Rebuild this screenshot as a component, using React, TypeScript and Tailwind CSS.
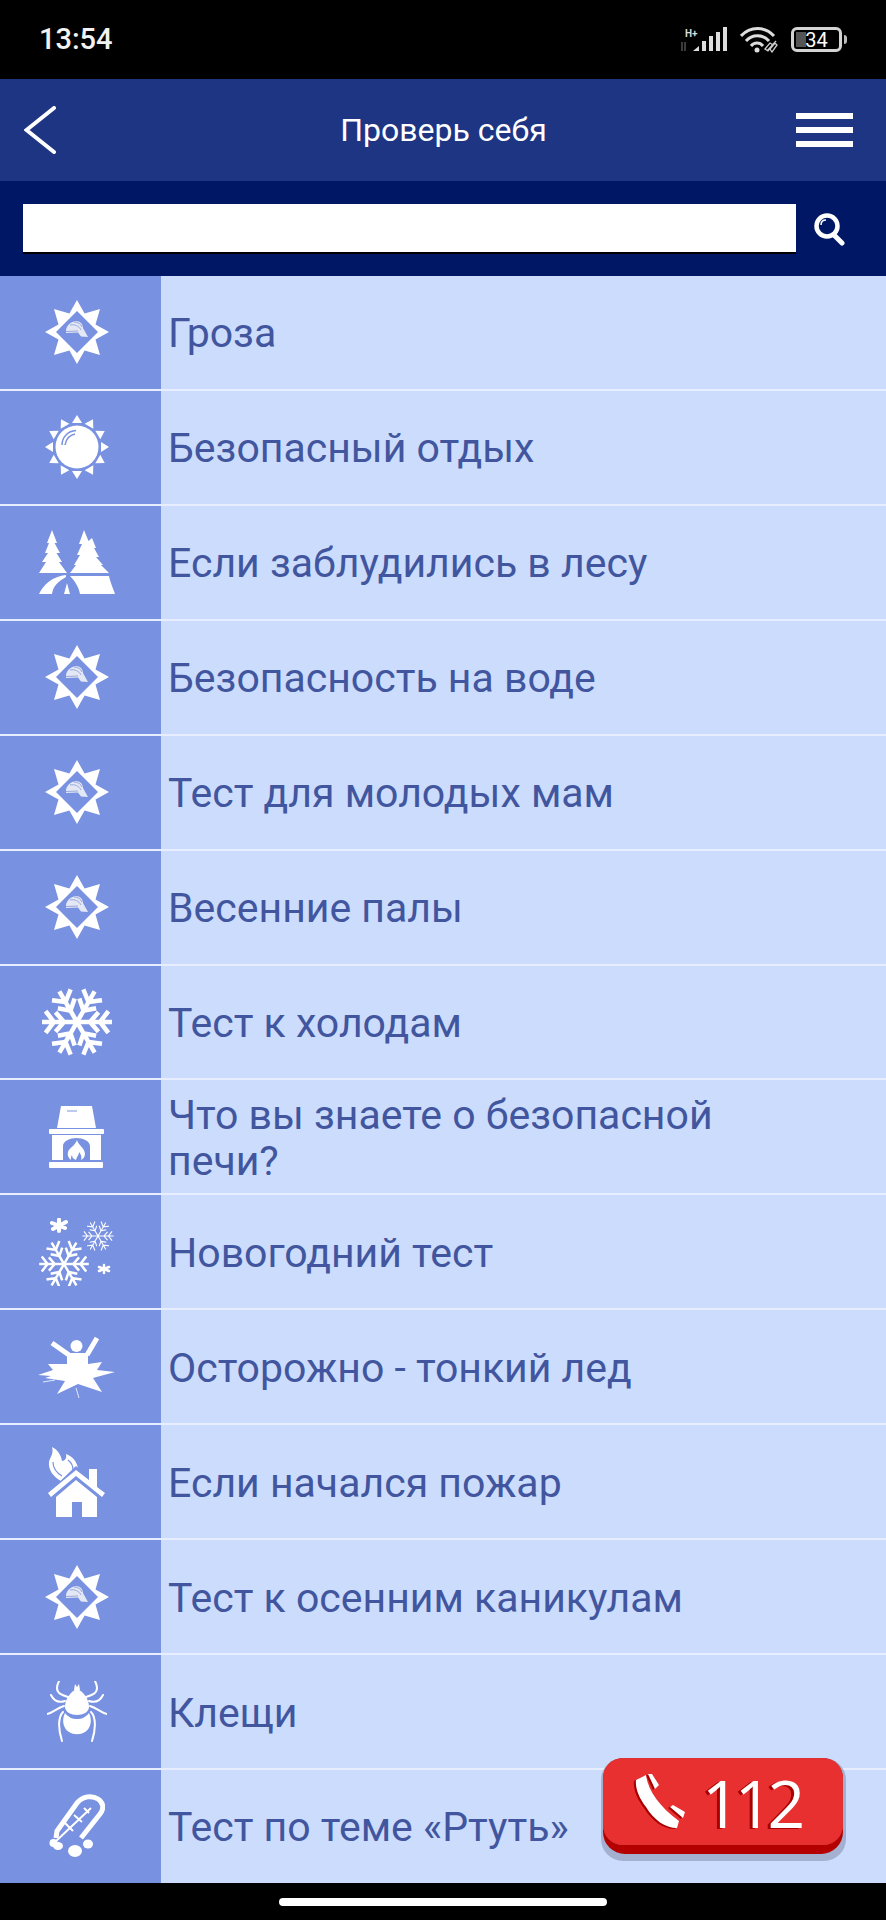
import type { ReactNode } from "react";

const Star = () => (
  <svg width="64" height="64" viewBox="0 0 64 64">
    <path
      fillRule="evenodd"
      fill="#fff"
      d="M32 0L39.600 13.500 55 9 50.500 24.400 64 32 50.500 39.600 55 55 39.600 50.500 32 64 24.400 50.500 9 55 13.500 39.600 0 32 13.500 24.400 9 9 24.400 13.500ZM32 11L11 32 32 53 53 32Z"
    />
    <path fill="#e4e8f5" d="M21 31C21 26 25 22 31 21 35 21 38 24 38 28L43 37 36 36.500 33 32.500 21 33Z" />
    <path fill="none" stroke="#8fa0d8" strokeWidth="0.900" d="M25 25C30 24 34 26 36 30M29 22C33 22 36 24 37 27M21 31.500L33 31" />
  </svg>
);

const Sun = () => (
  <svg width="64" height="64" viewBox="0 0 64 64">
    <circle cx="32" cy="32" r="21.500" fill="#fff" />
    <path fill="none" stroke="#7891e0" strokeWidth="1.500" d="M17 30C17 22 23 16 31 15.500M20 30C21 24 25 20 30 19" />
    {[0, 30, 60, 90, 120, 150, 180, 210, 240, 270, 300, 330].map((a) => (
      <polygon key={a} points="32,0 37,8 27,8" fill="#fff" transform={`rotate(${a} 32 32)`} />
    ))}
  </svg>
);

const Trees = () => (
  <svg width="76" height="65" viewBox="0 0 76 65">
    <path fill="#fff" d="M13 0L18 13 15.500 13 21 23 17.500 23 23 32 20 32 28 43H0L7 32 3 32 9 23 6 23 10 13 8 13Z" />
    <path fill="#fff" d="M45 0L49.500 11 53 8 57 18 55 18 60 27 57 27 64 35 62 35 70 43H31L37 35 35 35 41 25 38 25 43 14 40 14Z" />
    <path fill="#fff" d="M0 64C4 55 14 46 27 45L27 47C18 52 14 57 13 64Z" />
    <path fill="#fff" d="M31 46L70 46C72 55 75 60 76 64L41 64C40 57 35 50 31 46Z" />
    <polygon fill="#fff" points="25,64 28,53 31,64" />
  </svg>
);

const FlakeArm = ({ a, c, s }: { a: number; c: number; s: number }) => (
  <g transform={`rotate(${a} ${c} ${c}) translate(${c} ${c}) scale(${s})`}>
    <path d="M0 0V-33M-9 -30L0 -23 9 -30M-8 -20L0 -13 8 -20" />
  </g>
);

const Flake = ({ size, width }: { size: number; width: number }) => {
  const c = size / 2;
  const s = size / 70;
  return (
    <svg width={size} height={size} viewBox={`0 0 ${size} ${size}`}>
      <g fill="none" stroke="#fff" strokeWidth={width} strokeLinecap="square">
        {[30, 90, 150, 210, 270, 330].map((a) => (
          <FlakeArm key={a} a={a} c={c} s={s} />
        ))}
      </g>
    </svg>
  );
};

const Fireplace = () => (
  <svg width="55" height="62" viewBox="0 0 55 62">
    <path fill="#fff" d="M12 0H43L47 22H8ZM18 4.500V5.500H28V4.500Z" fillRule="evenodd" />
    <rect x="0" y="23" width="55" height="5" rx="1" fill="#fff" />
    <path fill="#fff" fillRule="evenodd" d="M3 29H52V54H3ZM14 54H41V40C41 35 34 32 27.500 32 21 32 14 35 14 40Z" />
    <rect x="0" y="56" width="54" height="6" rx="1" fill="#fff" />
    <path
      fill="#fff"
      d="M28 34C29 39 36 42 36 48 36 51 34 53 32 54 33 51 32 48 30 46 30 49 28 50 27 54 24 53 23 51 23 49 22 50 22 52 22 54 20 52 18 50 19 46 20 42 26 40 28 34Z"
    />
  </svg>
);

const SnowGroup = () => (
  <svg width="76" height="68" viewBox="0 0 76 68">
    <g transform="translate(0 21)">
      <Flake size={50} width={3.500} />
    </g>
    <g transform="translate(43 2)">
      <Flake size={32} width={2.400} />
    </g>
    <g fill="none" stroke="#fff" strokeWidth="4" strokeLinecap="round">
      <path d="M20 1.500L20 13M13 5L26 10M14 11L27 4" />
    </g>
    <g fill="none" stroke="#fff" strokeWidth="2.500" strokeLinecap="round">
      <path d="M65 47L65 55M60 49L70 53M60 53L70 49" />
    </g>
  </svg>
);

const Ice = () => (
  <svg width="77" height="62" viewBox="0 0 77 62">
    <circle cx="38.500" cy="10" r="6" fill="#fff" />
    <path fill="none" stroke="#fff" strokeWidth="5" d="M14 7L31 19M59 2L49 19" />
    <rect x="29" y="17" width="21" height="12" fill="#fff" />
    <path
      fill="#fff"
      d="M10 28L30 28H50L64 26 59 34 77 36 55 42 64 56 40 48 19 58 27 45 7 42 13 40 0 39 15 34Z"
    />
    <path fill="none" stroke="#fff" strokeWidth="0.800" d="M5 46L17 44M53 47L58 48M38 52L41 62" />
  </svg>
);

const House = () => (
  <svg width="58" height="70" viewBox="0 0 58 70">
    <path fill="#fff" d="M13 34C5 30 0 22 1 15 2 10 6 7 4 0 10 3 13 8 14 14 17 14 19 11 18 7 24 9 30 15 30 23L13 37Z" />
    <path fill="none" stroke="#7891e0" strokeWidth="1.200" d="M5 15C5 21 9 26 14 29M20 13C24 16 25 19 25 23" />
    <polygon fill="#7891e0" points="28,19 4,42 0,48 28,28 58,48 54,42" />
    <polygon fill="#fff" points="28,23 41,33 41,22 49,22 49,40 57,46 54,50 28,29 3,50 0,46" />
    <path fill="#fff" fillRule="evenodd" d="M8 50L28 33 49 50V70H8ZM24 55V70H34V55Z" />
  </svg>
);

const Tick = () => (
  <svg width="60" height="61" viewBox="0 0 60 61">
    <path fill="#fff" d="M30 8C36 10 42 18 42 26 42 31 36 34 30 34 24 34 18 31 18 26 18 18 24 10 30 8Z" />
    <path fill="#fff" d="M27 9L28 3 30 6 32 3 33 9Z" />
    <path fill="#fff" d="M18 32C22 37 26 38 30 38 34 38 38 37 42 32 46 40 43 48 38 51 33 54 27 54 22 51 17 48 14 40 18 32Z" />
    <g fill="none" stroke="#fff" strokeWidth="2" strokeLinecap="round">
      <path d="M21 16C14 14 10 12 10 7 10 4 11 2 12 0M18 20C12 22 7 20 4 14M17 25C10 27 6 32 0 33M16 31C11 36 11 48 15 60" />
      <path d="M39 16C46 14 50 12 50 7 50 4 49 2 48 0M42 20C48 22 53 20 56 14M43 25C50 27 54 32 60 33M44 31C49 36 49 48 45 60" />
    </g>
  </svg>
);

const Thermo = () => (
  <svg width="56" height="64" viewBox="0 0 56 64">
    <path
      fill="none"
      stroke="#fff"
      strokeWidth="5"
      d="M7 44L8 37 28 9C34 2 43 1 49 5 55 9 55 15 51 20L32 44"
    />
    <path fill="none" stroke="#fff" strokeWidth="2" d="M5 49L42 14M16 29L24 37M25 21L33 28M35 14L40 19" />
    <circle cx="4.500" cy="49" r="4" fill="#fff" />
    <ellipse cx="9" cy="52" rx="5" ry="4" fill="#fff" />
    <ellipse cx="26" cy="57" rx="7" ry="6" fill="#fff" />
    <ellipse cx="39" cy="50" rx="5" ry="4.500" fill="#fff" />
  </svg>
);

const icons: Record<string, () => ReactNode> = {
  star: Star,
  sun: Sun,
  trees: Trees,
  flake: () => <Flake size={70} width={4.500} />,
  fireplace: Fireplace,
  snow: SnowGroup,
  ice: Ice,
  house: House,
  tick: Tick,
  thermo: Thermo,
};

const rows = [
  { icon: "star", title: "Гроза" },
  { icon: "sun", title: "Безопасный отдых" },
  { icon: "trees", title: "Если заблудились в лесу" },
  { icon: "star", title: "Безопасность на воде" },
  { icon: "star", title: "Тест для молодых мам" },
  { icon: "star", title: "Весенние палы" },
  { icon: "flake", title: "Тест к холодам" },
  { icon: "fireplace", title: "Что вы знаете о безопасной печи?" },
  { icon: "snow", title: "Новогодний тест" },
  { icon: "ice", title: "Осторожно - тонкий лед" },
  { icon: "house", title: "Если начался пожар" },
  { icon: "star", title: "Тест к осенним каникулам" },
  { icon: "tick", title: "Клещи" },
  { icon: "thermo", title: "Тест по теме «Ртуть»" },
];

const StatusBar = () => (
  <div className="h-[79px] bg-black flex items-center justify-between pl-[39px] pr-[39px]">
    <span className="text-[29px] font-medium text-[#f2f2f2]">13:54</span>
    <div className="flex items-center gap-[13px]">
      <svg width="47" height="26" viewBox="0 0 47 26">
        <text x="5" y="10" fontSize="10" fontWeight="700" fill="#ddd" fontFamily="Roboto, sans-serif">H+</text>
        <path stroke="#777" strokeWidth="1" fill="none" d="M2 15V24M5 15V24" />
        <g fill="#ddd">
          <polygon points="13,24 19,19 19,24" />
          <rect x="22" y="14" width="4" height="10" />
          <rect x="29" y="9" width="4" height="15" />
          <rect x="36" y="5" width="4" height="19" />
          <rect x="43" y="0" width="4" height="24" />
        </g>
      </svg>
      <svg width="38" height="26" viewBox="0 0 38 26">
        <g fill="none" stroke="#ddd" strokeWidth="3">
          <path d="M1 9C10 -1 25 -1 34 9M6 14C12 7 23 7 29 14M11 19C14 15 20 15 23 19" />
        </g>
        <circle cx="17" cy="23" r="2.500" fill="#ddd" />
        <path fill="none" stroke="#ccc" strokeWidth="1.300" d="M27 24L36 14M25 22L30 16 33 18 28 24ZM30 22L35 16 37 18 32 25Z" />
      </svg>
      <div className="relative w-[51px] h-[25px] rounded-[6px] border-[3px] border-[#d4d4d4] flex items-center justify-center mr-[5px]">
        <div className="absolute left-[2px] top-[2px] bottom-[2px] w-[10px] bg-[#555]" />
        <span className="relative text-[20px] leading-none text-white">34</span>
        <div className="absolute -right-[8px] top-[5px] w-[3px] h-[9px] rounded-r bg-[#bbb]" />
      </div>
    </div>
  </div>
);

const Header = () => (
  <div className="h-[102px] bg-[#1e3584] flex items-center pl-[24px] pr-[33px]">
    <svg width="57" height="48" viewBox="0 0 57 48" className="shrink-0">
      <path d="M30 2L2.500 24 30 46" fill="none" stroke="#fff" strokeWidth="4" strokeLinecap="round" />
    </svg>
    <h1 className="flex-1 text-center text-[32px] text-white font-normal pl-[10px]">Проверь себя</h1>
    <div className="flex flex-col gap-[8px] w-[57px] shrink-0">
      <div className="h-[6px] bg-white" />
      <div className="h-[6px] bg-white" />
      <div className="h-[6px] bg-white" />
    </div>
  </div>
);

const SearchBar = () => (
  <div className="h-[95px] bg-[#001766] flex items-center pl-[23px] pr-[40px]">
    <div className="flex-1 h-[48px] bg-white shadow-[0_2px_0_#000] mb-[2px]" />
    <svg width="32" height="33" viewBox="0 0 32 33" className="ml-[18px] mt-[2px]">
      <circle cx="13" cy="13" r="10.500" fill="none" stroke="#fff" strokeWidth="4.500" />
      <path d="M7 12C7 9 9 7 12 7" fill="none" stroke="#fff" strokeWidth="1.500" />
      <path d="M20 22L28 30" stroke="#fff" strokeWidth="5" strokeLinecap="round" />
    </svg>
  </div>
);

export default function App() {
  return (
    <div className="relative w-[886px] h-[1920px] bg-black overflow-hidden font-['Roboto',sans-serif]">
      <StatusBar />
      <Header />
      <SearchBar />
      <div className="h-[1607px] flex flex-col">
        {rows.map((row, index) => {
          const Icon = icons[row.icon];
          return (
            <div key={index} className="flex-1 flex border-b-2 border-[#e6eeff] last:border-b-0 bg-[#ccdcfc]">
              <div className="w-[161px] bg-[#7891e0] flex items-center justify-center pr-[8px] shrink-0">
                <Icon />
              </div>
              <div className="flex items-center pl-[7px] pt-[2px] w-[620px] text-[41px] leading-[46px] text-[#41569e]">
                {row.title}
              </div>
            </div>
          );
        })}
      </div>
      <div className="h-[37px] flex items-center justify-center pt-[1px]">
        <div className="w-[328px] h-[8px] rounded-full bg-white" />
      </div>

      <div className="absolute left-[601px] top-[1758px] w-[245px] h-[103px] rounded-[22px] bg-[#a3b0d0]">
        <div className="absolute left-[2px] top-0 w-[240px] h-[96px] rounded-[22px] bg-[#b50000]" />
        <div className="absolute left-[2px] top-0 w-[240px] h-[87px] rounded-[20px] bg-[#e83030] flex items-center pl-[30px] shadow-[inset_0_0_0_1px_#d33]">
          <svg width="53" height="56" viewBox="0 0 53 56" className="drop-shadow-[-2px_1px_0_#a80000]">
            <path fill="#fff" d="M3 6L13 1C15 17 27 33 46 47L44 54C32 54 21 46 13 33 6 24 2 14 3 6Z" />
            <path fill="#fff" d="M15 0L19 0 26 11 22 15ZM37 33L40 31 52 38 50 44Z" />
          </svg>
          <span className="ml-[16px] text-[66px] leading-none font-medium text-white tracking-[-5px] font-['Open_Sans',sans-serif] [text-shadow:-3px_1px_0_#a80000]">
            112
          </span>
        </div>
      </div>
    </div>
  );
}
